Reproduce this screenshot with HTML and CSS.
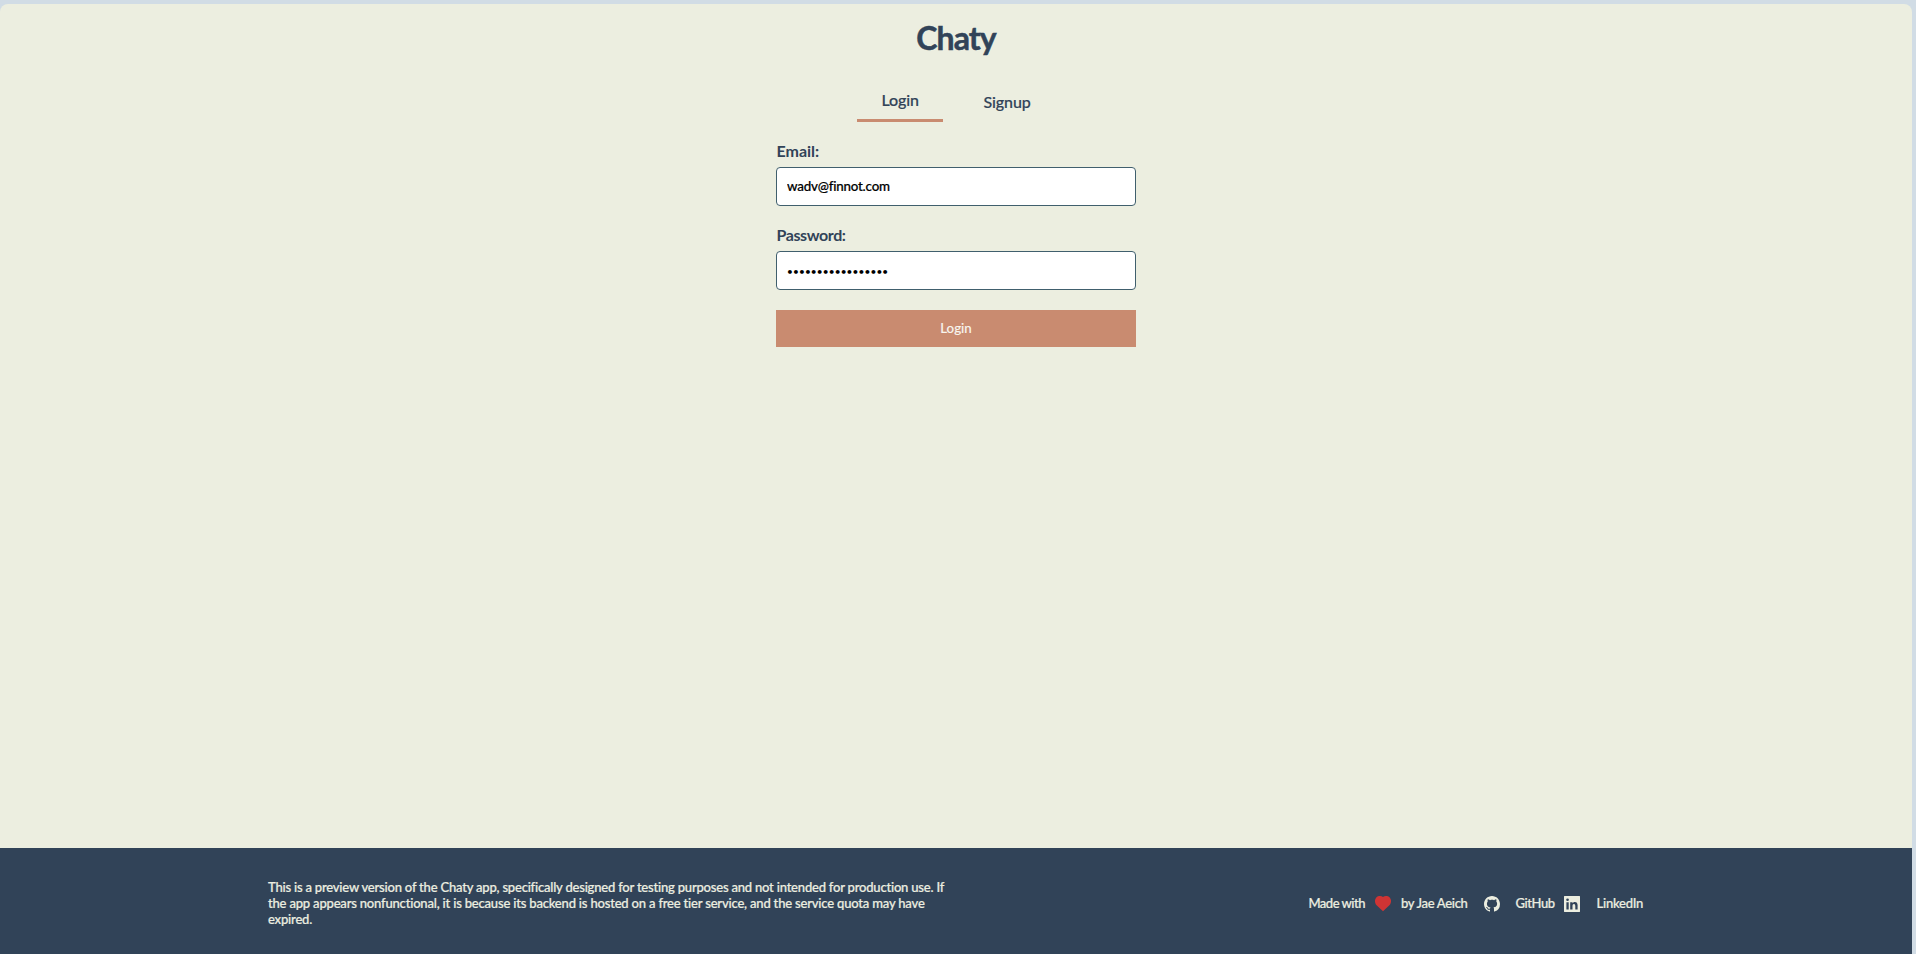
FILE: index.html
```html
<!DOCTYPE html>
<html lang="en">
<head>
<meta charset="utf-8">
<title>Chaty</title>
<link rel="stylesheet" href="styles.css">
</head>
<body>
<div class="app">
  <main class="auth">
    <h1 class="title">Chaty</h1>
    <nav class="tabs">
      <button class="tab tab-active" type="button">Login</button>
      <button class="tab" type="button">Signup</button>
    </nav>
    <form class="form">
      <label class="label" for="email">Email:</label>
      <input class="field" id="email" type="email" value="wadv@finnot.com">
      <label class="label label-password" for="password">Password:</label>
      <input class="field field-password" id="password" type="password" value="abcdefghijklmnopq">
      <button class="submit" type="button">Login</button>
    </form>
  </main>
  <footer class="footer">
    <p class="notice"><span class="line-1">This is a preview version of the Chaty app, specifically designed for testing purposes and not intended for production use. If</span><br><span class="line-2">the app appears nonfunctional, it is because its backend is hosted on a free tier service, and the service quota may have</span><br><span class="line-2">expired.</span></p>
    <div class="credits">
      <span class="made">Made with</span>
      <svg class="icon heart" viewBox="0 0 16 16"><path fill="#cf3434" d="M8 15.3 1.6 9.2C-.5 7.100-.5 3.200 1.300 1.400 3.100-.3 6.200-.4 8 .9 9.800-.4 12.900-.3 14.700 1.400 16.500 3.200 16.500 7.100 14.400 9.200Z"/></svg>
      <span class="author">by Jae Aeich</span>
      <svg class="icon github" viewBox="0 0 16 16"><path fill="currentColor" d="M8 0C3.580 0 0 3.580 0 8c0 3.540 2.290 6.530 5.470 7.590.4.070.55-.17.55-.38 0-.19-.01-.82-.01-1.490-2.010.37-2.530-.49-2.690-.94-.09-.23-.48-.94-.82-1.130-.28-.15-.68-.52-.01-.53.63-.01 1.080.58 1.230.82.72 1.210 1.870.87 2.330.66.07-.52.28-.87.51-1.070-1.780-.2-3.640-.89-3.640-3.950 0-.87.31-1.590.82-2.150-.08-.2-.36-1.020.08-2.120 0 0 .67-.21 2.200.82.64-.18 1.320-.27 2-.27s1.360.09 2 .27c1.530-1.040 2.200-.82 2.200-.82.44 1.100.16 1.920.08 2.120.51.56.82 1.270.82 2.150 0 3.070-1.870 3.750-3.650 3.950.29.25.54.73.54 1.480 0 1.070-.01 1.930-.01 2.200 0 .21.15.46.55.38A8.010 8.010 0 0 0 16 8c0-4.420-3.580-8-8-8Z"/></svg>
      <span class="github-name">GitHub</span>
      <svg class="icon linkedin" viewBox="0 0 16 16"><path fill="currentColor" fill-rule="evenodd" d="M.4 0h15.200a.4.4 0 0 1 .4.400v15.200a.4.4 0 0 1-.4.400H.4a.4.4 0 0 1-.4-.4V.4A.4.4 0 0 1 .4 0ZM2.400 6.200v7.400h2.300V6.200ZM3.550 2.400a1.350 1.350 0 1 0 0 2.700 1.350 1.350 0 0 0 0-2.700ZM6.200 6.200v7.400h2.300V9.900c0-1.100.4-1.900 1.400-1.900s1.400.8 1.400 1.900v3.700h2.300V9.300c0-2.100-1-3.300-2.700-3.300-1.200 0-2 .6-2.400 1.300V6.200Z"/></svg>
      <span class="linkedin-name">LinkedIn</span>
    </div>
  </footer>
</div>
</body>
</html>
```

FILE: styles.css
```css
* { box-sizing: border-box; }

body {
  margin: 0;
  background: #d1dce5;
  color: #314358;
  font: 500 16px/20px Lato, "Open Sans", sans-serif;
}

button, input { font: inherit; color: inherit; }

.app {
  display: flex;
  flex-direction: column;
  width: 1912px;
  height: 950px;
  margin-top: 4px;
  overflow: hidden;
  border-radius: 8px 8px 0 0;
  background: #eceee0;
}

.auth {
  flex: 1;
  display: flex;
  flex-direction: column;
  align-items: center;
}

.title {
  margin: 14px 0 0;
  font-size: 32px;
  line-height: 40px;
  font-weight: 700;
  letter-spacing: -0.9px;
  -webkit-text-stroke: 0.5px currentColor;
}

.tabs {
  display: flex;
  align-items: center;
  gap: 16px;
  width: 198px;
  height: 44px;
  margin-top: 22px;
}

.tab {
  flex-shrink: 0;
  padding: 12px 24px;
  border: 0;
  background: none;
  letter-spacing: -0.1px;
  -webkit-text-stroke: 0.2px currentColor;
}

.tab-active {
  margin-bottom: 3px;
  padding: 10px 24.500px 9px;
  border-bottom: 3px solid #c98b70;
}

.form {
  display: flex;
  flex-direction: column;
  width: 360px;
  margin-top: 17px;
}

.label {
  padding-left: 0.5px;
  margin-bottom: 6px;
  font-weight: 700;
}

.label-password {
  margin-top: 19px;
  letter-spacing: -0.4px;
}

.field {
  height: 39px;
  padding: 0 10px 1px;
  border: 1px solid #405f6d;
  border-radius: 4px;
  background: #fff;
  color: #000;
  font-size: 13.333px;
  letter-spacing: -0.2px;
  -webkit-text-stroke: 0.2px currentColor;
  outline: 0;
}

.field-password {
  padding-bottom: 0;
  font-size: 10px;
  letter-spacing: 0.16px;
  -webkit-text-stroke: 0;
}

.submit {
  height: 37px;
  margin-top: 20px;
  padding: 0 0 1px;
  border: 0;
  background: #c98b70;
  color: #f8f5ee;
  font-size: 13.333px;
  -webkit-text-stroke: 0.1px currentColor;
}

.footer {
  display: flex;
  align-items: center;
  height: 106px;
  padding: 6px 269px 0 268px;
  background: #314358;
  color: #eceee0;
  font-size: 13px;
  line-height: 16px;
  white-space: nowrap;
  -webkit-text-stroke: 0.2px currentColor;
}

.notice { margin: 0 0 2px; }
.line-1 { letter-spacing: -0.2px; }
.line-2 { letter-spacing: -0.185px; }

.credits {
  display: flex;
  align-items: center;
  margin-left: auto;
}

.credits span { margin-bottom: 2px; }

.icon { width: 16px; height: 16px; display: block; }
.made { letter-spacing: -0.5px; }
.author { letter-spacing: -0.3px; }
.github-name { letter-spacing: -0.45px; }
.linkedin-name { letter-spacing: -0.25px; }
.heart { margin: 0 10px; }
.github { margin: 0 16px; }
.linkedin { margin: 0 17px 0 9px; }
```
